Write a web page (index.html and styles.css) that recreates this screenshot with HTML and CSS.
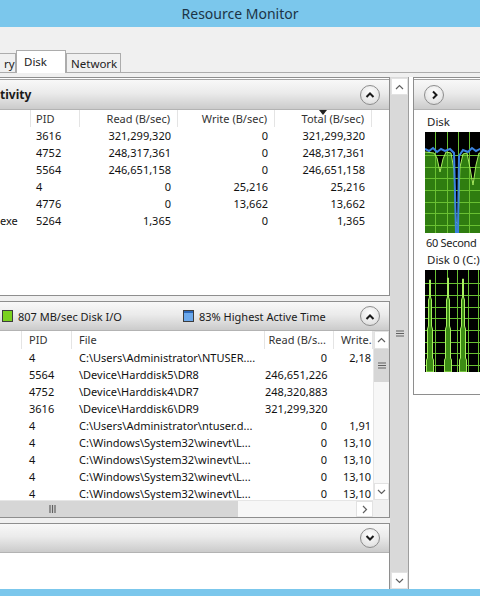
FILE: index.html
```html
<!DOCTYPE html>
<html lang="en">
  <head>
    <meta charset="utf-8" />
    <title>Resource Monitor</title>
    <link rel="stylesheet" href="styles.css">
  </head>
  <body>
    <header class="titlebar">Resource Monitor</header>

    <nav class="tabs">
      <span class="tab tab-cut">ry</span>
      <span class="tab tab-on">Disk</span>
      <span class="tab tab-net">Network</span>
    </nav>

    <div class="workspace">
      <div class="panes">

        <!-- Processes with disk activity -->
        <section class="pane pane-activity">
          <div class="pane-head pane-head-tall">
            <strong class="pane-title">tivity</strong>
            <span class="fold">
              <svg width="10" height="7" viewBox="0 0 10 7"><polyline points="1.5,6 5,2.5 8.5,6" /></svg>
            </span>
          </div>
          <div class="grid grid-activity">
            <span class="th img"></span>
            <span class="th">PID</span>
            <span class="th num">Read (B/sec)</span>
            <span class="th num">Write (B/sec)</span>
            <span class="th num sorted">Total (B/sec)</span>

            <span class="img"></span><span>3616</span><span class="num">321,299,320</span><span class="num">0</span><span class="num">321,299,320</span>
            <span class="img"></span><span>4752</span><span class="num">248,317,361</span><span class="num">0</span><span class="num">248,317,361</span>
            <span class="img"></span><span>5564</span><span class="num">246,651,158</span><span class="num">0</span><span class="num">246,651,158</span>
            <span class="img"></span><span>4</span><span class="num">0</span><span class="num">25,216</span><span class="num">25,216</span>
            <span class="img"></span><span>4776</span><span class="num">0</span><span class="num">13,662</span><span class="num">13,662</span>
            <span class="img">exe</span><span>5264</span><span class="num">1,365</span><span class="num">0</span><span class="num">1,365</span>
          </div>
        </section>

        <!-- Disk activity per file -->
        <section class="pane pane-files">
          <div class="pane-head">
            <div class="legend">
              <span class="legend-item"><i class="swatch swatch-io"></i>807 MB/sec Disk I/O</span>
              <span class="legend-item"><i class="swatch swatch-time"></i>83% Highest Active Time</span>
            </div>
            <span class="fold">
              <svg width="10" height="7" viewBox="0 0 10 7"><polyline points="1.5,6 5,2.5 8.5,6" /></svg>
            </span>
          </div>
          <div class="files">
            <div class="grid grid-files files-head">
              <span class="th"></span>
              <span class="th">PID</span>
              <span class="th">File</span>
              <span class="th num">Read (B/s...</span>
              <span class="th">Write.</span>
            </div>
            <div class="grid grid-files files-rows">
              <span></span><span>4</span><span>C:\Users\Administrator\NTUSER....</span><span class="num">0</span><span class="num w">2,18</span>
              <span></span><span>5564</span><span>\Device\Harddisk5\DR8</span><span class="num">246,651,226</span><span class="num w"></span>
              <span></span><span>4752</span><span>\Device\Harddisk4\DR7</span><span class="num">248,320,883</span><span class="num w"></span>
              <span></span><span>3616</span><span>\Device\Harddisk6\DR9</span><span class="num">321,299,320</span><span class="num w"></span>
              <span></span><span>4</span><span>C:\Users\Administrator\ntuser.d...</span><span class="num">0</span><span class="num w">1,91</span>
              <span></span><span>4</span><span>C:\Windows\System32\winevt\L...</span><span class="num">0</span><span class="num w">13,10</span>
              <span></span><span>4</span><span>C:\Windows\System32\winevt\L...</span><span class="num">0</span><span class="num w">13,10</span>
              <span></span><span>4</span><span>C:\Windows\System32\winevt\L...</span><span class="num">0</span><span class="num w">13,10</span>
              <span></span><span>4</span><span>C:\Windows\System32\winevt\L...</span><span class="num">0</span><span class="num w">13,10</span>
            </div>
            <div class="vbar">
              <span class="sb-btn sb-head">
                <svg width="9" height="6" viewBox="0 0 9 6"><polyline points="1,5 4.5,1.5 8,5" /></svg>
              </span>
              <span class="vbar-thumb">
                <svg width="8" height="7" viewBox="0 0 8 7"><path d="M0 1H8M0 3.5H8M0 6H8" /></svg>
              </span>
              <span class="vbar-track"></span>
              <span class="sb-btn">
                <svg width="9" height="6" viewBox="0 0 9 6"><polyline points="1,1 4.5,4.5 8,1" /></svg>
              </span>
            </div>
            <div class="hbar">
              <span class="hbar-thumb">
                <svg width="7" height="8" viewBox="0 0 7 8"><path d="M1 0V8M3.5 0V8M6 0V8" /></svg>
              </span>
              <span class="sb-btn">
                <svg width="6" height="9" viewBox="0 0 6 9"><polyline points="1,1 4.5,4.5 1,8" /></svg>
              </span>
            </div>
            <div class="corner"></div>
          </div>
        </section>

        <section class="pane pane-last">
          <div class="pane-head">
            <span class="fold">
              <svg width="10" height="7" viewBox="0 0 10 7"><polyline points="1.5,1 5,4.5 8.5,1" /></svg>
            </span>
          </div>
        </section>
      </div>

      <div class="vscroll">
        <span class="sb-btn">
          <svg width="9" height="6" viewBox="0 0 9 6"><polyline points="1,5 4.5,1.5 8,5" /></svg>
        </span>
        <span class="vscroll-thumb">
          <svg width="8" height="7" viewBox="0 0 8 7"><path d="M0 1H8M0 3.5H8M0 6H8" /></svg>
        </span>
        <span class="sb-btn">
          <svg width="9" height="6" viewBox="0 0 9 6"><polyline points="1,1 4.5,4.5 8,1" /></svg>
        </span>
      </div>

      <aside class="monitor">
        <div class="monitor-box">
          <div class="pane-head pane-head-tall monitor-head">
            <span class="fold">
              <svg width="7" height="10" viewBox="0 0 7 10"><polyline points="2,1.5 5.5,5 2,8.5" /></svg>
            </span>
          </div>
          <div class="charts">
            <p class="chart-label first">Disk</p>
            <svg class="chart" width="60" height="101" viewBox="0 0 60 101">
              <rect width="60" height="101" fill="#000" />
              <polygon class="chart-fill" points="0,101 0,20 9,21 12,26 15,40 18,27 21,20 26,21 29,38 31,90 33,92 35,35 38,22 42,21 45,36 48,53 51,33 54,21 60,22 60,101" />
              <path class="chart-grid" d="M0 23.5H60M0 35.5H60M0 46.5H60M0 58.5H60M0 70.5H60M0 81.5H60M0 93.5H60M10.5 0V101M22.5 0V101M33.5 0V101M44.5 0V101M55.5 0V101" />
              <polyline class="chart-line" points="0,20 9,21 12,26 15,40 18,27 21,20 26,21 29,38 31,90 33,92 35,35 38,22 42,21 45,36 48,53 51,33 54,21 60,22" />
              <polyline class="chart-blue" points="0,17 4,19 8,16 12,20 16,17 20,19 25,17 29,21 31,101 33,101 34,24 38,18 43,20 47,16 51,19 55,17 60,18" />
            </svg>
            <p class="chart-label tight">60 Second</p>
            <p class="chart-label">Disk 0 (C:)</p>
            <svg class="chart" width="60" height="102" viewBox="0 0 60 102">
              <rect width="60" height="102" fill="#000" />
              <path class="chart-grid" d="M0 13.5H60M0 25.5H60M0 37.5H60M0 48.5H60M0 60.5H60M0 72.5H60M0 83.5H60M0 95.5H60M10.5 0V102M22.5 0V102M32.5 0V102M43.5 0V102M53.5 0V102" />
              <polygon class="spike" points="4.5,10 5.5,10 5.5,27 6.5,30 6.5,56 7.5,59 7.5,88 8.5,90 8.5,102 1.5,102 1.5,90 2.5,88 2.5,59 3.5,56 3.5,30 4.5,27" />
              <polygon class="spike" points="22.5,8 23.5,8 23.5,27 24.5,30 24.5,56 25.5,59 25.5,88 26.5,90 26.5,102 19.5,102 19.5,90 20.5,88 20.5,59 21.5,56 21.5,30 22.5,27" />
              <polygon class="spike" points="37.5,9 38.5,9 38.5,27 39.5,30 39.5,56 40.5,59 40.5,88 41.5,90 41.5,102 34.5,102 34.5,90 35.5,88 35.5,59 36.5,56 36.5,30 37.5,27" />
            </svg>
          </div>
        </div>
      </aside>
    </div>

    <footer class="statusbar"></footer>
  </body>
</html>
```

FILE: styles.css
```css
* {
  margin: 0;
  padding: 0;
  box-sizing: border-box;
}

body {
  width: 480px;
  height: 596px;
  overflow: hidden;
  background: #f0f0f0;
  font-family: "Noto Sans", "DejaVu Sans", sans-serif;
  font-size: 11px;
  color: #1a1a1a;
}

/* window chrome */
.titlebar {
  height: 27px;
  line-height: 27px;
  background: #7bc7ec;
  color: #1c3446;
  font-size: 14px;
  text-align: center;
}

.statusbar {
  height: 7px;
  background: #7bc7ec;
}

.tabs {
  height: 46px;
  display: flex;
  align-items: flex-end;
  border-bottom: 1px solid #acacac;
}

.tab {
  height: 19px;
  padding: 2px 4px 0;
  border: 1px solid #acacac;
  border-bottom: 0;
  font-size: 11.5px;
  line-height: 15px;
  color: #222;
  white-space: nowrap;
}

.tab-cut {
  width: 16px;
  border-left: 0;
  padding-right: 2px;
  text-align: right;
}

.tab-on {
  width: 50px;
  height: 23px;
  margin-bottom: -1px;
  padding: 3px 0 0 7px;
  background: #fff;
}

.tab-net {
  width: 55px;
}

/* main area */
.workspace {
  display: flex;
  height: 516px;
  padding-top: 4px;
}

.panes {
  width: 390px;
  display: flex;
  flex-direction: column;
}

.pane {
  background: #fff;
  border: 1px solid #8e8e8e;
  border-left: 0;
}

.pane-activity {
  height: 219px;
}

.pane-files {
  height: 217px;
  margin-top: 5px;
}

.pane-last {
  flex: 1;
  margin-top: 5px;
  border-bottom: 0;
}

.pane-head {
  height: 29px;
  display: flex;
  align-items: center;
  padding-right: 9px;
  background: linear-gradient(#f8f8f8, #ebebeb 45%, #cbcbcb);
  border-bottom: 1px solid #b3b3b3;
}

.pane-head-tall {
  height: 31px;
  margin-top: 1px;
  border-top: 1px solid #a2a2a2;
}

.pane-title {
  font-size: 12px;
  font-weight: bold;
  color: #1a1a1a;
}

.fold {
  width: 20px;
  height: 20px;
  margin-left: auto;
  display: grid;
  place-items: center;
  border: 1px solid #8d8d8d;
  border-radius: 50%;
  background: radial-gradient(circle at 50% 35%, #fff, #e6e6e6 65%, #cfcfcf);
}

.fold svg {
  fill: none;
  stroke: #1a1a1a;
  stroke-width: 2;
}

/* tables */
.grid {
  display: grid;
  grid-auto-rows: 17px;
  line-height: 17px;
  white-space: nowrap;
  color: #111;
}

.grid span {
  overflow: hidden;
  padding-left: 5px;
}

.grid .num {
  padding: 0 7px 0 0;
  text-align: right;
}

.grid .img {
  padding-left: 0;
}

.th {
  border-right: 1px solid #e4e4e4;
  color: #333;
}

.grid-activity {
  grid-template-columns: 31px 49px 98px 97px 97px;
}

.sorted {
  position: relative;
}

.sorted::before {
  content: "";
  position: absolute;
  left: 44px;
  top: 0;
  border: 4px solid transparent;
  border-top: 5px solid #222;
}

.grid-files {
  grid-template-columns: 22px 50px 193px 69px 39px;
}

.grid-files span {
  padding-left: 7px;
}

.grid-files .w {
  padding-right: 2px;
}

.files {
  display: grid;
  grid-template-columns: 373px 16px;
  grid-template-rows: 18px 151px 17px;
}

.files-head {
  grid-area: 1 / 1;
  grid-auto-rows: 18px;
  line-height: 18px;
}

.files-rows {
  grid-area: 2 / 1;
  overflow: hidden;
}

/* scrollbars */
.sb-btn {
  height: 17px;
  display: grid;
  place-items: center;
  background: #fff;
  border: 1px solid #e2e2e2;
}

.sb-btn svg,
.vbar-thumb svg,
.vscroll-thumb svg,
.hbar-thumb svg {
  fill: none;
  stroke: #606060;
  stroke-width: 1.2;
}

.vbar {
  grid-area: 1 / 2 / 3 / 3;
  display: flex;
  flex-direction: column;
  border-left: 1px solid #e6e6e6;
  background: #f7f7f7;
}

.vbar .sb-head {
  height: 18px;
}

.vbar-thumb {
  height: 33px;
  display: grid;
  place-items: center;
  background: #d6d6d6;
}

.vbar-track {
  flex: 1;
}

.hbar {
  grid-area: 3 / 1;
  display: flex;
  background: #f7f7f7;
  border-top: 1px solid #e6e6e6;
}

.hbar-thumb {
  width: 238px;
  display: flex;
  align-items: center;
  padding-left: 49px;
  background: #d6d6d6;
}

.hbar .sb-btn {
  width: 17px;
  height: 16px;
  margin-left: auto;
}

.corner {
  grid-area: 3 / 2;
  background: #f0f0f0;
}

.legend {
  display: flex;
  align-items: center;
  margin-left: 2px;
}

.legend-item {
  display: flex;
  align-items: center;
  gap: 5px;
  white-space: nowrap;
  color: #1a1a1a;
}

.legend-item:first-child {
  width: 181px;
}

.swatch {
  width: 11px;
  height: 12px;
  border: 1px solid #3c3c3c;
}

.swatch-io {
  background: #7ad11f;
}

.swatch-time {
  background: linear-gradient(#2c67b8 0 2px, #6ca9ec 2px);
}

.vscroll {
  width: 19px;
  padding-left: 1px;
  display: flex;
  flex-direction: column;
  border-right: 1px solid #9e9e9e;
  background: #dadada;
}

.vscroll .sb-btn:first-child {
  margin-top: 1px;
}

.vscroll-thumb {
  flex: 1;
  display: grid;
  place-items: center;
  background: #d9d9d9;
}

/* right hand graphs */
.monitor {
  flex: 1;
  padding-left: 4px;
  overflow: hidden;
  background: #fff;
}

.monitor-box {
  height: 318px;
  border: 1px solid #8e8e8e;
  border-right: 0;
}

.monitor-head {
  padding-left: 10px;
}

.monitor-head .fold {
  margin-left: 0;
}

.charts {
  padding-left: 11px;
}

.chart-label {
  padding-left: 2px;
  font-size: 11.5px;
  line-height: 17px;
  white-space: nowrap;
  color: #222;
}

.chart-label.first {
  margin-top: 3px;
}

.chart-label.tight {
  padding-left: 1px;
  font-size: 11px;
  letter-spacing: -0.3px;
}

.chart {
  display: block;
  margin: 2px 0 1px;
}

.chart-fill {
  fill: #2f7d10;
}

.chart-grid {
  fill: none;
  stroke: #69c032;
  stroke-width: 1;
}

.chart-line {
  fill: none;
  stroke: #a6ec5e;
  stroke-width: 1;
}

.chart-blue {
  fill: none;
  stroke: #3b82e0;
  stroke-width: 2;
}

.spike {
  fill: #3c8c14;
  stroke: #a8f060;
  stroke-width: 1;
}
```
